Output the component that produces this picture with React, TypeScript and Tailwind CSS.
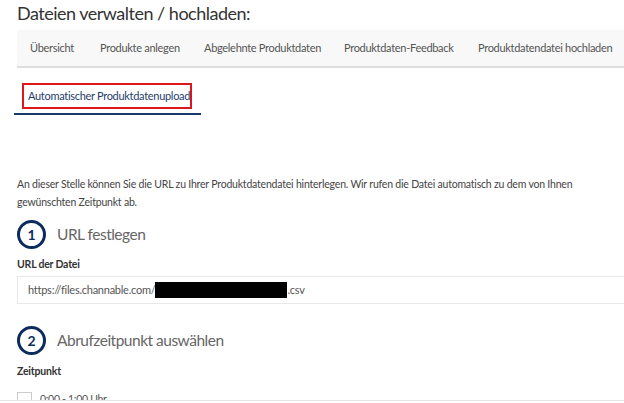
import React from "react";

// Hauptnavigation: Breite je Tab, damit die Einträge wie im Original stehen
const tabs = [
  { label: "Übersicht", w: "w-[70px]" },
  { label: "Produkte anlegen", w: "w-[104px]" },
  { label: "Abgelehnte Produktdaten", w: "w-[140px]" },
  { label: "Produktdaten-Feedback", w: "w-[134px]" },
  { label: "Produktdatendatei hochladen", w: "w-[150px]" },
];

// Nummerierter Schritt-Kreis mit Überschrift
function Step({ n, title }: { n: number; title: string }) {
  return (
    <div className="flex items-center gap-[11px] h-[29px]">
      <div className="w-[29px] h-[29px] shrink-0 rounded-full border-[3px] border-[#0d2b5c] flex items-center justify-center text-[14px] font-bold text-[#0d2b5c] leading-none">
        {n}
      </div>
      <span className="text-[15.5px] tracking-[-0.5px] text-[#666] leading-none whitespace-nowrap">{title}</span>
    </div>
  );
}

export default function App() {
  return (
    <div className="w-[624px] h-[403px] overflow-hidden bg-white font-['Lato',sans-serif] text-[#444] relative">
      <div className="pl-[17px]">
        <h1 className="text-[18px] tracking-[-0.5px] leading-[26px] text-[#333] whitespace-nowrap">
          Dateien verwalten / hochladen:
        </h1>

        {/* Hauptnavigation */}
        <div className="mt-[4px] h-[38px] bg-[#f8f8f8] border-b-2 border-[#dedede] flex items-center pl-[13px] text-[11px] tracking-[-0.3px] text-[#555] whitespace-nowrap">
          {tabs.map((t) => (
            <span key={t.label} className={`${t.w} shrink-0`}>
              {t.label}
            </span>
          ))}
        </div>
      </div>

      {/* Unter-Tab */}
      <div className="pl-[14px] mt-[15px]">
        <div className="w-[187px] border-b-2 border-[#1b386b] pb-[4px]">
          <div className="ml-[8px] w-[170px] h-[26px] border-2 border-[#e0161e] flex items-center pl-[4px] text-[11px] tracking-[-0.3px] text-[#1f3d6e] whitespace-nowrap">
            Automatischer Produktdatenupload
          </div>
        </div>
      </div>

      <div className="px-[17px]">
        <p className="mt-[60px] text-[10.5px] tracking-[-0.2px] leading-[18px] text-[#444] whitespace-nowrap">
          An dieser Stelle können Sie die URL zu Ihrer Produktdatendatei hinterlegen. Wir rufen die Datei automatisch zu dem von Ihnen
          <br />
          gewünschten Zeitpunkt ab.
        </p>

        <div className="mt-[9px]">
          <Step n={1} title="URL festlegen" />
        </div>

        <div className="mt-[8px] text-[10.5px] leading-[14px] tracking-[-0.2px] font-bold text-[#333]">URL der Datei</div>
        <div className="mt-[5px] h-[28px] w-[640px] border border-[#e8e8e8] flex items-center pl-[10px] text-[11px] tracking-[-0.25px] text-[#555] whitespace-nowrap">
          <span>https://files.channable.com/</span>
          <span className="inline-block w-[132px] h-[16px] bg-black" />
          <span>.csv</span>
        </div>

        <div className="mt-[22px]">
          <Step n={2} title="Abrufzeitpunkt auswählen" />
        </div>

        <div className="mt-[9px] text-[10.5px] leading-[14px] tracking-[-0.2px] font-bold text-[#333]">Zeitpunkt</div>
        <div className="mt-[14px] flex items-center gap-[8px]">
          <span className="w-[15px] h-[15px] shrink-0 border border-[#ccc] bg-white" />
          <span className="text-[10.5px] tracking-[-0.3px] text-[#555] leading-[15px]">0:00 - 1:00 Uhr</span>
        </div>
      </div>

      <div className="absolute left-0 right-0 top-[400px] h-[3px] bg-white border-t border-[#e5e5e5]" />
    </div>
  );
}
